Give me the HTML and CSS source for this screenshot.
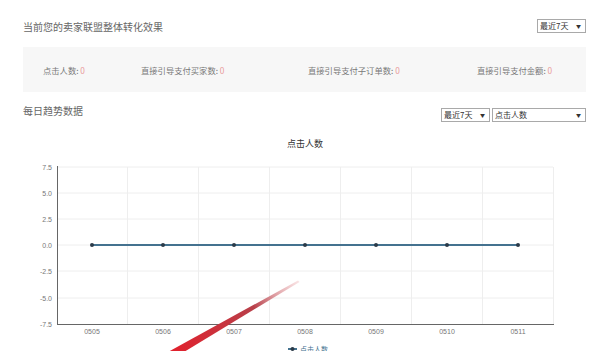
FILE: index.html
```html
<!DOCTYPE html>
<html>
<head>
<meta charset="utf-8">
<link rel="stylesheet" href="styles.css">
</head>
<body>
<div class="page">
  <div class="head-row">
    <div class="title">当前您的卖家联盟整体转化效果</div>
    <div class="sel sel-small"><span>最近7天</span><span class="arr">▼</span></div>
  </div>
  <div class="stats">
    <div class="stat s1">点击人数: <span class="val">0</span></div>
    <div class="stat s2">直接引导支付买家数: <span class="val">0</span></div>
    <div class="stat s3">直接引导支付子订单数: <span class="val">0</span></div>
    <div class="stat s4">直接引导支付金额: <span class="val">0</span></div>
  </div>
  <div class="sec-row">
    <div class="title">每日趋势数据</div>
    <div class="sels">
      <div class="sel sel-small"><span>最近7天</span><span class="arr">▼</span></div>
      <div class="sel sel-wide"><span>点击人数</span><span class="arr">▼</span></div>
    </div>
  </div>
  <svg class="chart" width="563" height="221" viewBox="23 130 563 221">
    <defs>
      <linearGradient id="rg" x1="298" y1="280" x2="170" y2="351" gradientUnits="userSpaceOnUse">
        <stop offset="0" stop-color="#f2c4c6" stop-opacity="0.5"/>
        <stop offset="0.35" stop-color="#b8404a"/>
        <stop offset="1" stop-color="#e2202c"/>
      </linearGradient>
    </defs>
    <text x="305" y="146" class="ctitle" text-anchor="middle">点击人数</text>
    <g class="grid">
      <line x1="57" y1="166" x2="553" y2="166"/>
      <line x1="57" y1="192" x2="553" y2="192"/>
      <line x1="57" y1="218" x2="553" y2="218"/>
      <line x1="57" y1="244" x2="553" y2="244"/>
      <line x1="57" y1="270" x2="553" y2="270"/>
      <line x1="57" y1="297" x2="553" y2="297"/>
      <line x1="127.5" y1="166" x2="127.5" y2="323"/>
      <line x1="198.5" y1="166" x2="198.5" y2="323"/>
      <line x1="269.5" y1="166" x2="269.5" y2="323"/>
      <line x1="340.5" y1="166" x2="340.5" y2="323"/>
      <line x1="411.5" y1="166" x2="411.5" y2="323"/>
      <line x1="482.5" y1="166" x2="482.5" y2="323"/>
      <line x1="553.5" y1="166" x2="553.5" y2="323"/>
    </g>
    <line x1="57.5" y1="165" x2="57.5" y2="324" class="axis"/>
    <line x1="57" y1="323.5" x2="554" y2="323.5" class="axis"/>
    <g class="ylab" text-anchor="end">
      <text x="52" y="168.5">7.5</text>
      <text x="52" y="194.5">5.0</text>
      <text x="52" y="220.5">2.5</text>
      <text x="52" y="246.5">0.0</text>
      <text x="52" y="272.5">-2.5</text>
      <text x="52" y="299.5">-5.0</text>
      <text x="52" y="325.5">-7.5</text>
    </g>
    <g class="xlab" text-anchor="middle">
      <text x="92" y="332.5">0505</text>
      <text x="163" y="332.5">0506</text>
      <text x="234" y="332.5">0507</text>
      <text x="305" y="332.5">0508</text>
      <text x="376" y="332.5">0509</text>
      <text x="447" y="332.5">0510</text>
      <text x="518" y="332.5">0511</text>
    </g>
    <line x1="92" y1="244" x2="518" y2="244" class="series"/>
    <g class="dots">
      <circle cx="92" cy="244" r="2"/>
      <circle cx="163" cy="244" r="2"/>
      <circle cx="234" cy="244" r="2"/>
      <circle cx="305" cy="244" r="2"/>
      <circle cx="376" cy="244" r="2"/>
      <circle cx="447" cy="244" r="2"/>
      <circle cx="518" cy="244" r="2"/>
    </g>
    <line x1="288" y1="348" x2="297" y2="348" class="series"/>
    <circle cx="292.5" cy="348" r="2" class="dot1"/>
    <text x="300" y="351" class="legend">点击人数</text>
    <polygon points="298,279.5 299.5,281 184,351 168,351" fill="url(#rg)"/>
  </svg>
</div>
</body>
</html>
```

FILE: styles.css
```css
html, body {
  margin: 0;
  padding: 0;
  background: #fff;
  font-family: "Noto Sans CJK SC", "Liberation Sans", sans-serif;
  color: #666;
  overflow: hidden;
}
.page {
  width: 563px;
  padding: 0 14px 0 23px;
}
.head-row {
  height: 47px;
  display: flex;
  justify-content: space-between;
  align-items: flex-start;
}
.head-row .title {
  margin-top: 20px;
}
.head-row .sel {
  margin-top: 19px;
}
.title {
  font-size: 10px;
  line-height: 14px;
  color: #666;
}
.sel {
  box-sizing: border-box;
  height: 14px;
  border: 1px solid #a9a9a9;
  background: #fff;
  font-size: 8px;
  line-height: 12px;
  color: #333;
  display: flex;
  justify-content: space-between;
  padding: 0 4px 0 2px;
}
.sel .arr {
  font-size: 5px;
  line-height: 12px;
}
.sel-small { width: 49px; }
.sel-wide { width: 94px; }
.stats {
  height: 45px;
  background: #f7f7f7;
  position: relative;
  font-size: 8.3px;
  color: #777;
}
.stat {
  position: absolute;
  top: 18px;
  line-height: 10px;
  white-space: nowrap;
}
.s1 { left: 20px; }
.s2 { left: 118px; }
.s3 { left: 285px; }
.s4 { left: 454px; }
.val { color: #e99a9a; }
.sec-row {
  margin-top: 12px;
  height: 18px;
  display: flex;
  justify-content: space-between;
  align-items: flex-start;
}
.sec-row .title { margin-top: 0; }
.sels {
  display: flex;
  gap: 2px;
  margin-top: 4px;
}
.chart {
  display: block;
  margin-top: 9px;
}
.ctitle {
  font-size: 9px;
  fill: #333;
}
.grid line {
  stroke: #eeeeee;
  stroke-width: 1;
}
.axis {
  stroke: #666;
  stroke-width: 1;
}
.ylab text, .xlab text {
  font-family: "Liberation Sans", sans-serif;
  font-size: 7px;
  fill: #777;
}
.series {
  stroke: #44728f;
  stroke-width: 2;
}
.dots circle, .dot1 {
  fill: #2b3a48;
}
.legend {
  font-size: 7px;
  fill: #44728f;
}
```
